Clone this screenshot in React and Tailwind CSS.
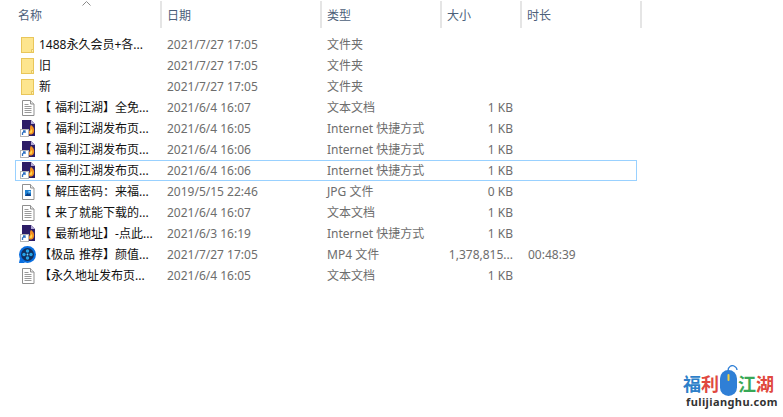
import React from "react";

const FONT = "font-['Noto_Sans','Noto_Sans_CJK_SC',sans-serif]";

function Folder() {
  return (
    <svg width="13" height="16" viewBox="0 0 13 16" className="block">
      <rect x="0.5" y="0.5" width="12" height="15" fill="#fde58e" stroke="#e9c65a" />
      <path d="M10.500 15.500v-3h2" fill="#fff3bd" stroke="#e4c560" />
    </svg>
  );
}
function Doc() {
  return (
    <svg width="14" height="16" viewBox="0 0 14 16" className="block">
      <path d="M1.500.5h8l3.500 3.500v11.500h-11.500z" fill="#fff" stroke="#8f8f8f" />
      <path d="M9.500.5v3.500h3.500" fill="#e8e8e8" stroke="#8f8f8f" />
      <path d="M3.500 4.500h4M3.500 6.500h7M3.500 8.500h7M3.500 10.500h7M3.500 12.500h7" stroke="#9a9a9a" />
    </svg>
  );
}
function Shortcut() {
  return (
    <svg width="16" height="17" viewBox="0 0 16 17" className="block">
      <path d="M2 0h9l4 4v12H2z" fill="#2c1c66" />
      <path d="M11 0l4 4h-4z" fill="#b3a9d6" />
      <path d="M11 5c3 2 4 5 2.500 8-1 1.500-3 2-4.500 1-1-2 1-3 1-5 0-1.500 0-3 1-4z" fill="#f39020" />
      <path d="M11.500 9c1 1 1 3 0 4-1 .5-1.500 0-1.500-1 0-1 1-2 1.500-3z" fill="#ffd84d" />
      <rect x="0.500" y="9.500" width="8" height="7" fill="#fff" stroke="#b5b5b5" />
      <path d="M2.500 15v-2l2-2M3 11h2v2" fill="none" stroke="#2d6fc0" strokeWidth="1.300" />
    </svg>
  );
}
function Jpg() {
  return (
    <svg width="14" height="16" viewBox="0 0 14 16" className="block">
      <path d="M1.500.5h8l3.500 3.500v11.500h-11.500z" fill="#fff" stroke="#909090" />
      <path d="M9.500.5v3.500h3.500" fill="#eee" stroke="#909090" />
      <rect x="4" y="6" width="6" height="6" fill="#1f7fd0" />
      <path d="M4 12l2.500-3 1.500 1.500 1-1 1 2.500z" fill="#0b3f86" />
      <rect x="7.500" y="7" width="2" height="1.500" fill="#9fd6f5" />
    </svg>
  );
}
function Video() {
  return (
    <svg width="17" height="17" viewBox="0 0 17 17" className="block">
      <path d="M0 17h6L1 12z" fill="#0a6fe0" />
      <circle cx="8.500" cy="8.500" r="8.500" fill="#0a6fe0" />
      <circle cx="8.500" cy="8.500" r="6.500" fill="#10305f" />
      <circle cx="8.500" cy="5" r="1.700" fill="#27a6ea" />
      <circle cx="8.500" cy="12" r="1.700" fill="#27a6ea" />
      <circle cx="5" cy="8.500" r="1.700" fill="#27a6ea" />
      <circle cx="12" cy="8.500" r="1.700" fill="#27a6ea" />
      <circle cx="8.500" cy="8.500" r="0.900" fill="#7fd4ff" />
    </svg>
  );
}

const ROWS = [
  [Folder, "1488永久会员+各...", "2021/7/27 17:05", "文件夹", "", ""],
  [Folder, "旧", "2021/7/27 17:05", "文件夹", "", ""],
  [Folder, "新", "2021/7/27 17:05", "文件夹", "", ""],
  [Doc, "【 福利江湖】全免...", "2021/6/4 16:07", "文本文档", "1 KB", ""],
  [Shortcut, "【 福利江湖发布页...", "2021/6/4 16:05", "Internet 快捷方式", "1 KB", ""],
  [Shortcut, "【 福利江湖发布页...", "2021/6/4 16:06", "Internet 快捷方式", "1 KB", ""],
  [Shortcut, "【 福利江湖发布页...", "2021/6/4 16:06", "Internet 快捷方式", "1 KB", "", true],
  [Jpg, "【 解压密码：来福...", "2019/5/15 22:46", "JPG 文件", "0 KB", ""],
  [Doc, "【 来了就能下载的...", "2021/6/4 16:07", "文本文档", "1 KB", ""],
  [Shortcut, "【 最新地址】-点此...", "2021/6/3 16:19", "Internet 快捷方式", "1 KB", ""],
  [Video, "【极品 推荐】颜值...", "2021/7/27 17:05", "MP4 文件", "1,378,815...", "00:48:39"],
  [Doc, "【永久地址发布页...", "2021/6/4 16:05", "文本文档", "1 KB", ""],
];

const HEADERS = ["名称", "日期", "类型", "大小", "时长"];
const WIDTHS = ["w-[160px]", "w-[160px]", "w-[120px]", "w-[80px]", "w-[120px]"];

export default function App() {
  return (
    <div className={`${FONT} relative h-[417px] w-[783px] overflow-hidden bg-white text-[12px] leading-[21px]`}>
      <div className="relative ml-[2px] flex h-[28px] items-start pt-[1px]">
        {HEADERS.map((h, i) => (
          <div key={h} className={`${WIDTHS[i]} flex h-[27px] items-center border-r-2 border-[#e5e5e5] pt-[2px] ${i === 0 ? "pl-[16px]" : "pl-[5px]"} text-[#4c607a]`}>
            {h}
          </div>
        ))}
        <svg width="9" height="5" viewBox="0 0 9 5" className="absolute left-[80px] top-[1px]">
          <path d="M.5 4.500l4-4 4 4" fill="none" stroke="#8a8a8a" />
        </svg>
      </div>
      <div className="ml-[15px] mt-[6px] w-[622px]">
        {ROWS.map(([Icon, name, date, type, size, dur, sel], i) => (
          <div key={i} className={`flex h-[21px] items-center border ${sel ? "border-[#99d1ff]" : "border-transparent"} text-[#6d6d6d]`}>
            <div className="flex w-[23px] shrink-0 justify-center"><Icon /></div>
            <div className="w-[128px] shrink-0 truncate text-[#111111] [word-spacing:1px]">{name}</div>
            <div className="w-[160px] shrink-0">{date}</div>
            <div className="w-[120px] shrink-0">{type}</div>
            <div className="w-[66px] shrink-0 text-right">{size}</div>
            <div className="pl-[15px]">{dur}</div>
          </div>
        ))}
      </div>
      <div className="absolute left-[683px] top-[365px] w-[92px]">
        <div className="flex h-[31px] items-end text-[18px] font-bold leading-[24px]">
          <span className="text-[#2d7fc9]">福</span>
          <span className="text-[#e0483e]">利</span>
          <svg width="19" height="31" viewBox="0 0 19 31" className="shrink-0">
            <path d="M9 6C9 1 13 0 15 1s3 3 3 4" fill="none" stroke="#2f7fd6" strokeWidth="1.300" />
            <rect x="1" y="5" width="17" height="26" rx="8.500" fill="#2f7fd6" />
            <rect x="8.500" y="9" width="2" height="7" rx="1" fill="#f4d03f" />
          </svg>
          <span className="text-[#38a856]">江</span>
          <span className="text-[#e0483e]">湖</span>
        </div>
        <div className="ml-[3px] -mt-[1px] whitespace-nowrap text-[11px] font-bold leading-[13px] tracking-[0.4px] text-[#333333]">fulijianghu.com</div>
      </div>
    </div>
  );
}
